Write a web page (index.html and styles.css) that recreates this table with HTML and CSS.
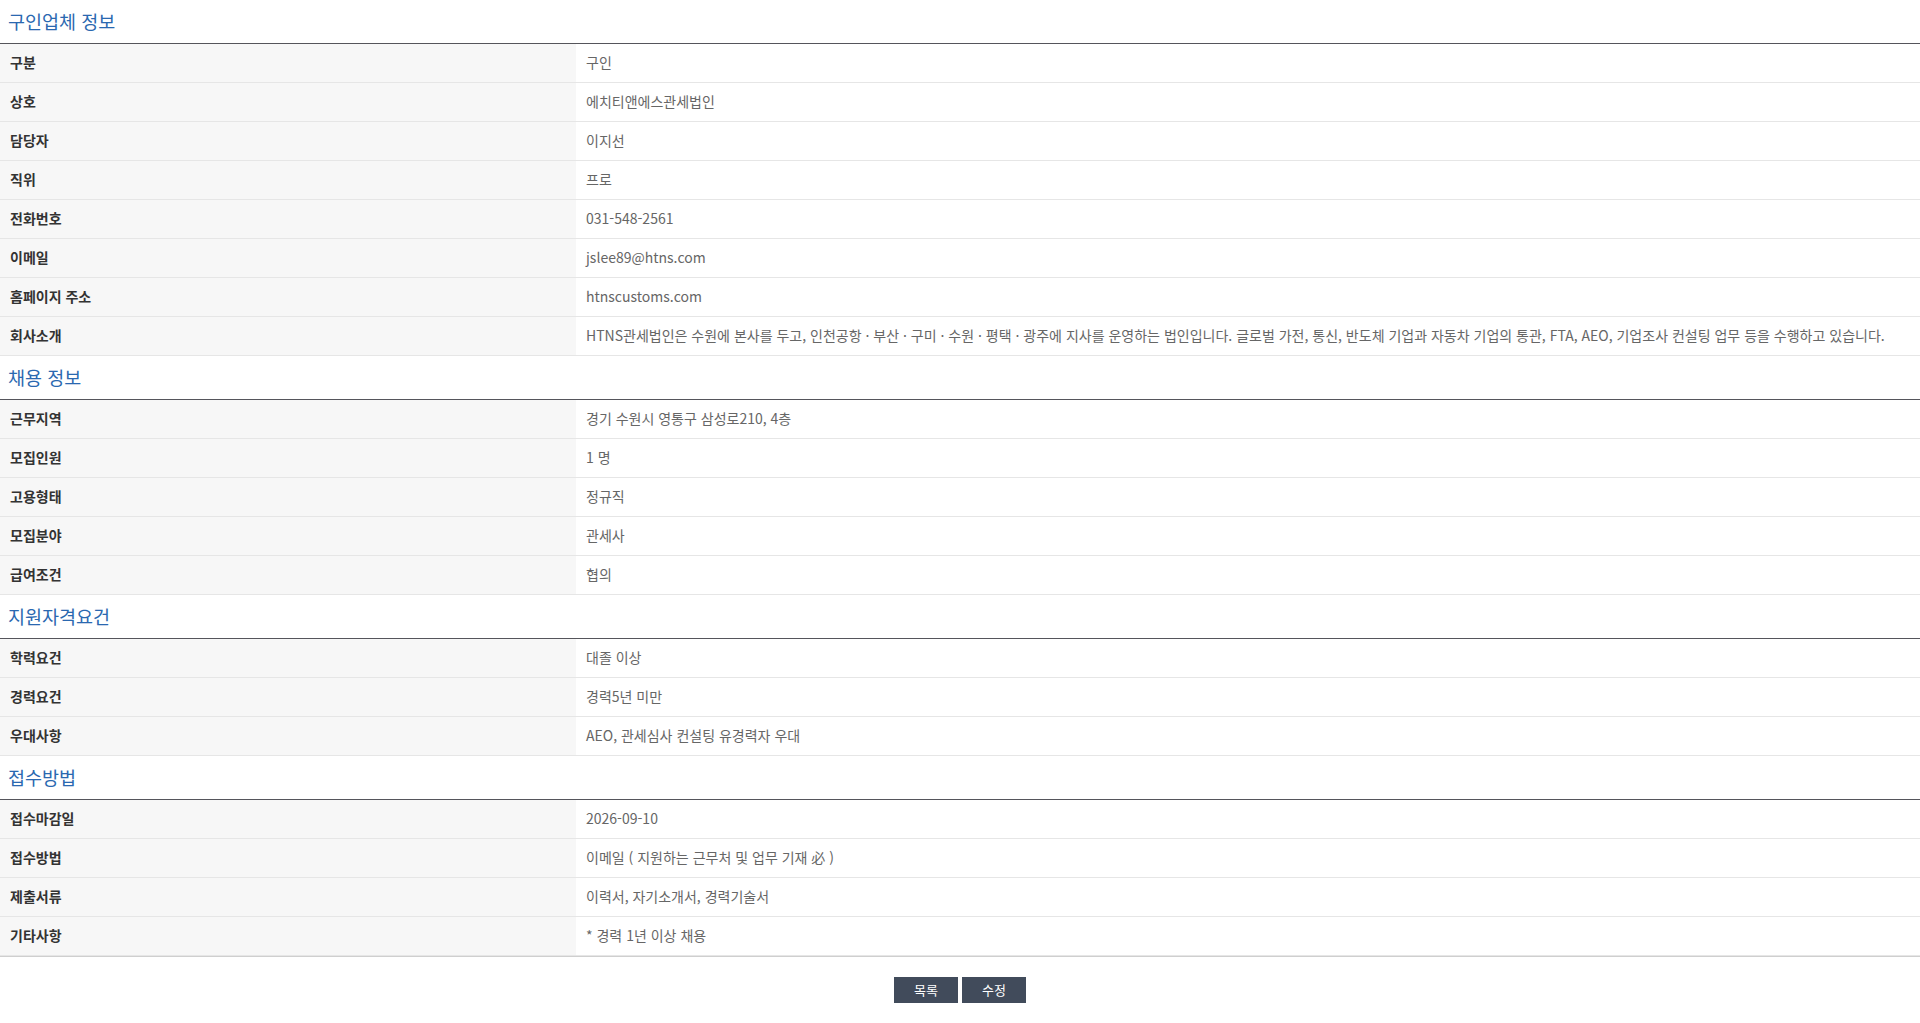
FILE: index.html
```html
<!DOCTYPE html>
<html lang="ko">
<head>
<meta charset="utf-8">
<title>채용 정보</title>
<link rel="stylesheet" href="styles.css">
</head>
<body>
<div class="page">
  <section class="section">
    <h2 class="section-title">구인업체 정보</h2>
    <div class="info">
      <div class="row"><div class="label">구분</div><div class="value">구인</div></div>
      <div class="row"><div class="label">상호</div><div class="value">에치티앤에스관세법인</div></div>
      <div class="row"><div class="label">담당자</div><div class="value">이지선</div></div>
      <div class="row"><div class="label">직위</div><div class="value">프로</div></div>
      <div class="row"><div class="label">전화번호</div><div class="value">031-548-2561</div></div>
      <div class="row"><div class="label">이메일</div><div class="value">jslee89@htns.com</div></div>
      <div class="row"><div class="label">홈페이지 주소</div><div class="value">htnscustoms.com</div></div>
      <div class="row"><div class="label">회사소개</div><div class="value nowrap">HTNS관세법인은 수원에 본사를 두고, 인천공항 · 부산 · 구미 · 수원 · 평택 · 광주에 지사를 운영하는 법인입니다. 글로벌 가전, 통신, 반도체 기업과 자동차 기업의 통관, FTA, AEO, 기업조사 컨설팅 업무 등을 수행하고 있습니다.</div></div>
    </div>
  </section>
  <section class="section">
    <h2 class="section-title">채용 정보</h2>
    <div class="info">
      <div class="row"><div class="label">근무지역</div><div class="value">경기 수원시 영통구 삼성로210, 4층</div></div>
      <div class="row"><div class="label">모집인원</div><div class="value">1 명</div></div>
      <div class="row"><div class="label">고용형태</div><div class="value">정규직</div></div>
      <div class="row"><div class="label">모집분야</div><div class="value">관세사</div></div>
      <div class="row"><div class="label">급여조건</div><div class="value">협의</div></div>
    </div>
  </section>
  <section class="section">
    <h2 class="section-title">지원자격요건</h2>
    <div class="info">
      <div class="row"><div class="label">학력요건</div><div class="value">대졸 이상</div></div>
      <div class="row"><div class="label">경력요건</div><div class="value">경력5년 미만</div></div>
      <div class="row"><div class="label">우대사항</div><div class="value">AEO, 관세심사 컨설팅 유경력자 우대</div></div>
    </div>
  </section>
  <section class="section">
    <h2 class="section-title">접수방법</h2>
    <div class="info last">
      <div class="row"><div class="label">접수마감일</div><div class="value">2026-09-10</div></div>
      <div class="row"><div class="label">접수방법</div><div class="value">이메일 ( 지원하는 근무처 및 업무 기재 必 )</div></div>
      <div class="row"><div class="label">제출서류</div><div class="value">이력서, 자기소개서, 경력기술서</div></div>
      <div class="row"><div class="label">기타사항</div><div class="value">* 경력 1년 이상 채용</div></div>
    </div>
  </section>
  <div class="actions">
    <button class="btn" type="button">목록</button>
    <button class="btn" type="button">수정</button>
  </div>
</div>
</body>
</html>
```

FILE: styles.css
```css
* { box-sizing: border-box; }
html, body { margin: 0; padding: 0; background: #fff; }
body {
  font-family: "Noto Sans CJK KR", "Noto Sans", "Liberation Sans", sans-serif;
  font-size: 14px;
  color: #333;
}
.section-title {
  margin: 0;
  height: 43px;
  display: flex;
  align-items: center;
  padding: 0 0 1px 8px;
  font-size: 18.5px;
  font-weight: 400;
  color: #2a68b0;
  line-height: 1;
}
.info {
  border-top: 1px solid #55555b;
}
.info.last {
  border-bottom: 1px solid #cfcfcf;
}
.row {
  display: grid;
  grid-template-columns: 576px 1fr;
  height: 39px;
  border-bottom: 1px solid #e6e6e6;
}
.label {
  background: #f7f7f7;
  font-weight: 700;
  color: #333;
  padding: 0 0 2px 10px;
  display: flex;
  align-items: center;
}
.value {
  color: #666;
  padding: 0 0 2px 10px;
  display: flex;
  align-items: center;
  white-space: nowrap;
  overflow: hidden;
}
.actions {
  display: flex;
  justify-content: center;
  gap: 4px;
  margin-top: 20px;
}
.btn {
  width: 64px;
  height: 26px;
  border: 0;
  border-radius: 0;
  background: #414b5b;
  color: #fff;
  font-family: "Noto Sans CJK KR", "Noto Sans", sans-serif;
  font-size: 13px;
  padding: 0;
  line-height: 26px;
  cursor: pointer;
}
```
